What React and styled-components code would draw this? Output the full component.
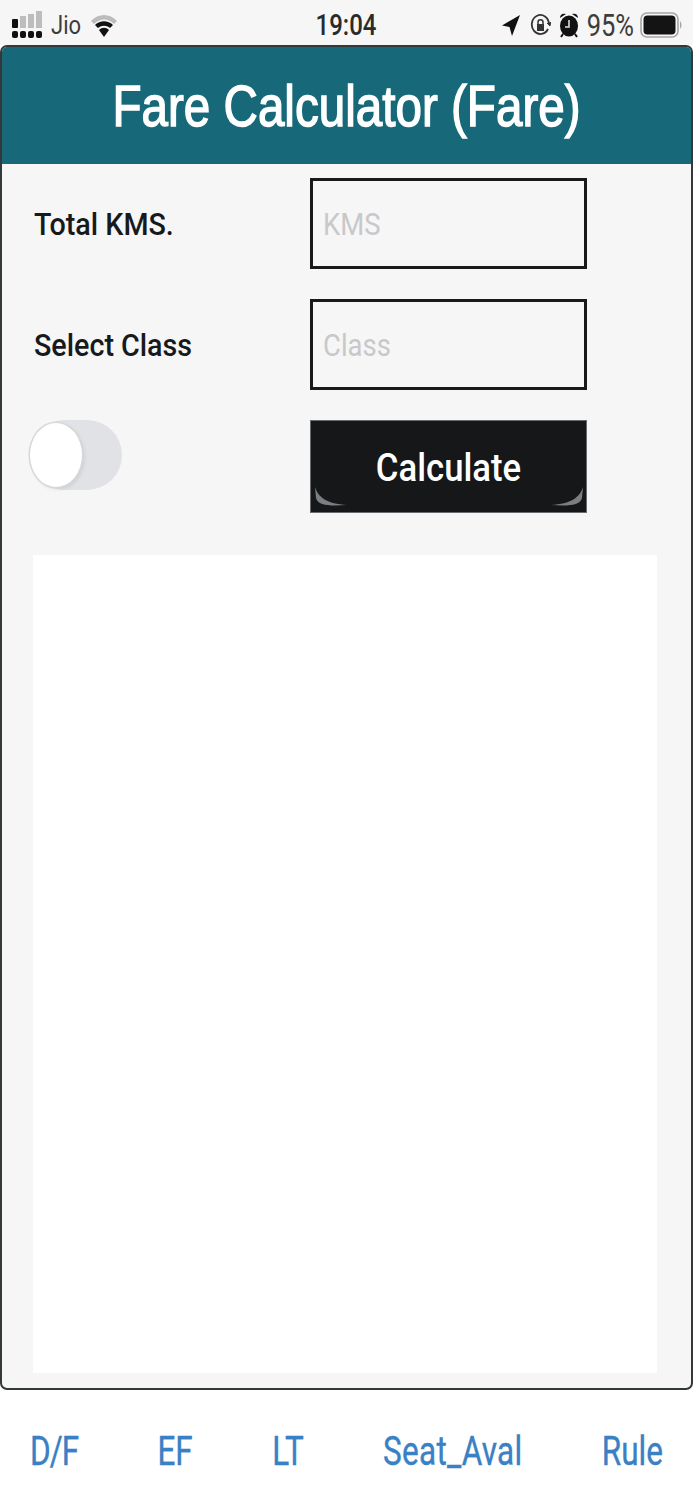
import React from 'react'
import styled, { createGlobalStyle } from 'styled-components'

const Global = createGlobalStyle`
  html, body { margin: 0; padding: 0; background: #fff; }
  body { font-family: "Liberation Sans", Arial, sans-serif; }
  * { box-sizing: border-box; }
`

const Page = styled.div`
  width: 693px;
  height: 1500px;
  display: flex;
  flex-direction: column;
  overflow: hidden;
  background: #fff;
`

const StatusBar = styled.div`
  height: 45px;
  flex: none;
  background: #f6f6f6;
  display: grid;
  grid-template-columns: 1fr auto 1fr;
  align-items: center;
  padding: 4px 11px 0 11px;
  color: #333;
`

const StatusLeft = styled.div`
  display: flex;
  align-items: center;
  gap: 7px;
`

const StatusRight = styled.div`
  display: flex;
  align-items: center;
  justify-content: flex-end;
  gap: 8px;
`

const Tall = styled.span`
  display: inline-block;
  transform: scaleY(${p => p.$y || 1.2});
  white-space: nowrap;
`

const Carrier = styled(Tall)`
  font: 400 22px "Roboto", sans-serif;
  color: #3c3c3c;
  margin: 0 2px 0 1px;
`

const Clock = styled(Tall)`
  font: 500 24px "Roboto", sans-serif;
  color: #2a2a2a;
  margin-right: 1px;
`

const Battery = styled(Tall)`
  font: 400 25.5px "Roboto", sans-serif;
  color: #3c3c3c;
  margin-right: -2px;
`

const Card = styled.main`
  height: 1345px;
  flex: none;
  display: flex;
  flex-direction: column;
  background: #f6f6f6;
  border: 2px solid #33383b;
  border-radius: 7px;
  overflow: hidden;
`

const Header = styled.header`
  height: 117px;
  flex: none;
  padding-top: 2px;
  background: #17697a;
  display: flex;
  align-items: center;
  justify-content: center;
`

const Title = styled(Tall)`
  font: 400 47.6px "Liberation Sans", sans-serif;
  -webkit-text-stroke: 1.2px #fff;
  color: #fff;
`

const Form = styled.section`
  display: grid;
  grid-template-columns: 308px 277px;
  row-gap: 30px;
  padding-top: 14px;
`

const Label = styled.div`
  align-self: center;
  padding-left: 32px;
  font: 500 28.7px "Roboto", sans-serif;
  color: #17191b;
`

const Field = styled.div`
  height: 91px;
  border: 3.5px solid #17191b;
  display: flex;
  align-items: center;
  padding: 2px 0 0 10px;
  font: 400 27.5px "Roboto", sans-serif;
  color: #c8c8cb;
`

const ToggleCell = styled.div`
  padding-left: 27px;
`

const Toggle = styled.div`
  position: relative;
  width: 93px;
  height: 70px;
  border-radius: 35px;
  background: #e1e2e5;
`

const Knob = styled.span`
  position: absolute;
  left: 1px;
  top: 3px;
  width: 52px;
  height: 64px;
  border-radius: 50%;
  background: #fff;
  box-shadow: 0 0 0 1.5px #d6d7da, 2px 2px 4px rgba(0, 0, 0, 0.1);
`

const CalcButton = styled.div`
  position: relative;
  height: 93px;
  padding-top: 2px;
  background: #151719;
  border: 1px solid #666b70;
  display: flex;
  align-items: center;
  justify-content: center;
  color: #fff;
  font: 500 34.7px "Roboto", sans-serif;
  overflow: hidden;
`

const CornerMark = styled.svg`
  position: absolute;
  bottom: 6px;
  ${p => (p.$right ? 'right: 3px; transform: scaleX(-1);' : 'left: 4px;')}
`

const ResultPanel = styled.div`
  width: 624px;
  height: 818px;
  margin: 42px 0 0 31px;
  background: #fff;
`

const TabBar = styled.nav`
  flex: 1;
  display: flex;
  align-items: center;
  justify-content: space-between;
  padding: 13px 30px 0 30px;
  background: #fff;
`

const Tab = styled(Tall)`
  font: 400 31.5px "Roboto", sans-serif;
  letter-spacing: ${p => p.$spacing || 0}px;
  -webkit-text-stroke: 0.3px #3a80c4;
  color: #3a80c4;
`

const LocationGlyph = styled.svg`
  margin-right: 2px;
`

const Corner = ({ right }) => (
  <CornerMark $right={right} width="32" height="19" viewBox="0 0 32 19">
    <path d="M0 0 C3 10 12 17 32 18 C16 19 3 19 1 11 Z" fill="#7b7f82" />
  </CornerMark>
)

const SignalIcon = () => (
  <svg width="32" height="28" viewBox="0 0 32 28" fill="#111">
    <rect x="1" y="8" width="6" height="9" rx="1" />
    <rect x="9" y="5" width="6" height="12" fill="#bdbdbd" />
    <rect x="17" y="3" width="6" height="14" fill="#bdbdbd" />
    <rect x="25" y="0" width="6" height="17" fill="#bdbdbd" />
    <rect x="1" y="20" width="6" height="7" rx="2" />
    <rect x="9" y="20" width="6" height="7" rx="2" />
    <rect x="17" y="20" width="6" height="7" rx="2" />
    <rect x="25" y="20" width="6" height="7" rx="2" />
  </svg>
)

const WifiIcon = () => (
  <svg width="28" height="26" viewBox="0 0 28 26">
    <path d="M1 9 C8 1 20 1 27 9 L24 12 C18 6 10 6 4 12 Z" fill="#bcbcbc" />
    <path d="M5 13 C10 8 18 8 23 13 L20 16 C16 13 12 13 8 16 Z" fill="#111" />
    <path d="M9 18 C12 15 16 15 19 18 L14 25 Z" fill="#111" />
  </svg>
)

const LocationIcon = () => (
  <LocationGlyph width="18" height="22" viewBox="0 0 18 22" fill="#111">
    <path d="M18 1 L10 22 L7.5 13 L0 11.5 Z" />
  </LocationGlyph>
)

const LockRotateIcon = () => (
  <svg width="21" height="24" viewBox="0 0 21 24" fill="none" stroke="#333" strokeWidth="1.8">
    <path d="M18 16 A8.6 9.5 0 1 1 19 11" />
    <path d="M17 10 L20 13 L20.6 9" fill="#333" strokeWidth="1" />
    <rect x="7" y="11" width="7" height="7" fill="#333" stroke="none" />
    <path d="M8 11 V9 C8 6 13 6 13 9 V11" strokeWidth="1.5" />
  </svg>
)

const AlarmIcon = () => (
  <svg width="20" height="26" viewBox="0 0 20 26">
    <path d="M1 6 C1 2 4 1 7 2 Z M19 6 C19 2 16 1 13 2 Z" fill="#111" />
    <ellipse cx="10" cy="14" rx="9" ry="10.5" fill="#111" />
    <path d="M4 22 L2 25 M16 22 L18 25" stroke="#111" strokeWidth="2" />
    <path d="M10 8 V15 H6" stroke="#ddd" strokeWidth="1.6" fill="none" />
  </svg>
)

const BatteryIcon = () => (
  <svg width="42" height="26" viewBox="0 0 42 26">
    <rect x="1" y="1" width="37" height="24" rx="6" fill="none" stroke="#a5a5a5" strokeWidth="1.6" />
    <rect x="3.5" y="3.5" width="32" height="19" rx="4" fill="#141414" />
    <path d="M40 9 C42 11 42 15 40 17 Z" fill="#a5a5a5" />
  </svg>
)

export default function App() {
  return (
    <Page>
      <Global />
      <StatusBar>
        <StatusLeft>
          <SignalIcon />
          <Carrier>Jio</Carrier>
          <WifiIcon />
        </StatusLeft>
        <Clock>19:04</Clock>
        <StatusRight>
          <LocationIcon />
          <LockRotateIcon />
          <AlarmIcon />
          <Battery>95%</Battery>
          <BatteryIcon />
        </StatusRight>
      </StatusBar>
      <Card>
        <Header>
          <Title $y={1.2}>Fare Calculator (Fare)</Title>
        </Header>
        <Form>
          <Label><Tall $y={1.12}>Total KMS.</Tall></Label>
          <Field><Tall $y={1.12}>KMS</Tall></Field>
          <Label><Tall $y={1.12}>Select Class</Tall></Label>
          <Field><Tall $y={1.12}>Class</Tall></Field>
          <ToggleCell>
            <Toggle><Knob /></Toggle>
          </ToggleCell>
          <CalcButton>
            <Tall $y={1.12}>Calculate</Tall>
            <Corner />
            <Corner right />
          </CalcButton>
        </Form>
        <ResultPanel />
      </Card>
      <TabBar>
        <Tab $y={1.3} $spacing={-1}>D/F</Tab>
        <Tab $y={1.3}>EF</Tab>
        <Tab $y={1.3}>LT</Tab>
        <Tab $y={1.3} $spacing={0.3}>Seat_Aval</Tab>
        <Tab $y={1.3}>Rule</Tab>
      </TabBar>
    </Page>
  )
}
